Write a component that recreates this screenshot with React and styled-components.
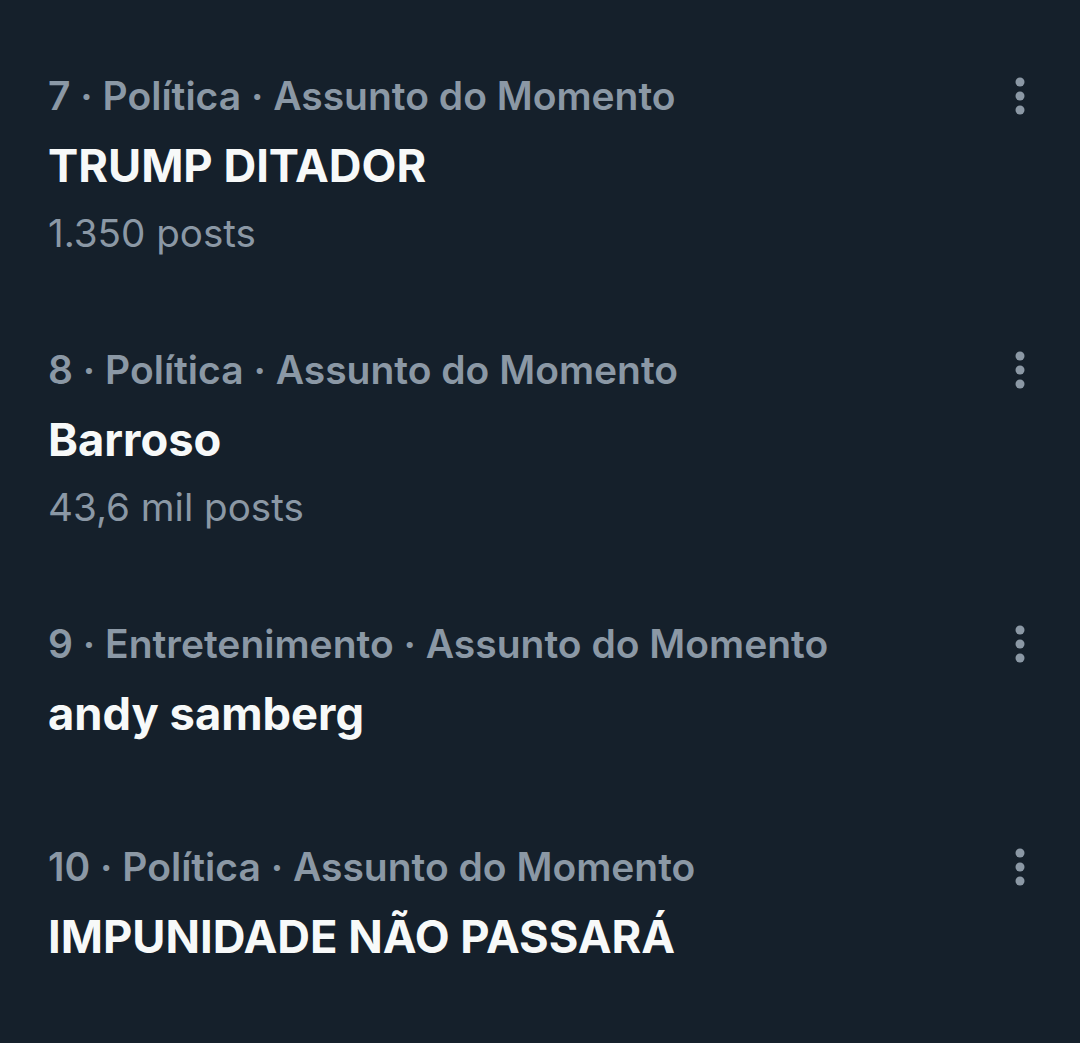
import React from "react";
import styled, { createGlobalStyle } from "styled-components";

const Global = createGlobalStyle`
  html, body { margin: 0; padding: 0; background: #15202b; }
  body { font-family: Inter, "Noto Sans", sans-serif; }
`;

const Page = styled.div`
  width: 1080px;
  min-height: 1043px;
  background: #15202b;
  padding-top: 28px;
  box-sizing: border-box;
`;

const List = styled.ul`
  list-style: none;
  margin: 0;
  padding: 0;
`;

const Row = styled.li`
  display: flex;
  align-items: flex-start;
  padding: 44px 36px 45px 48px;
`;

const Body = styled.div`
  flex: 1;
  display: flex;
  flex-direction: column;
`;

const Meta = styled.div`
  color: #8b98a5;
  font-size: 39px;
  font-weight: 600;
  line-height: 48px;
  white-space: nowrap;
`;

const Title = styled.div`
  color: #f7f9f9;
  font-size: 45.3px;
  font-weight: 700;
  line-height: 52px;
  margin-top: 20px;
  margin-bottom: 14px;
`;

const Posts = styled.div`
  color: #8b98a5;
  font-size: 38.6px;
  font-weight: 400;
  line-height: 48px;
  margin-top: 3px;
`;

const MoreButton = styled.button`
  width: 48px;
  height: 48px;
  border: 0;
  padding: 0;
  background: transparent;
  display: flex;
  align-items: center;
  justify-content: center;
  color: #8b98a5;
`;

const Dots = () => (
  <svg width="12" height="40" viewBox="0 0 12 40" fill="currentColor">
    <circle cx="6" cy="6" r="4.5" />
    <circle cx="6" cy="20" r="4.5" />
    <circle cx="6" cy="34" r="4.5" />
  </svg>
);

const trends = [
  { rank: 7, cat: "Política", title: "TRUMP DITADOR", posts: "1.350 posts" },
  { rank: 8, cat: "Política", title: "Barroso", posts: "43,6 mil posts" },
  { rank: 9, cat: "Entretenimento", title: "andy samberg" },
  { rank: 10, cat: "Política", title: "IMPUNIDADE NÃO PASSARÁ" },
];

export default function App() {
  return (
    <Page>
      <Global />
      <List>
        {trends.map((t) => (
          <Row key={t.rank}>
            <Body>
              <Meta>
                {t.rank} · {t.cat} · Assunto do Momento
              </Meta>
              <Title>{t.title}</Title>
              {t.posts && <Posts>{t.posts}</Posts>}
            </Body>
            <MoreButton aria-label="Mais">
              <Dots />
            </MoreButton>
          </Row>
        ))}
      </List>
    </Page>
  );
}
